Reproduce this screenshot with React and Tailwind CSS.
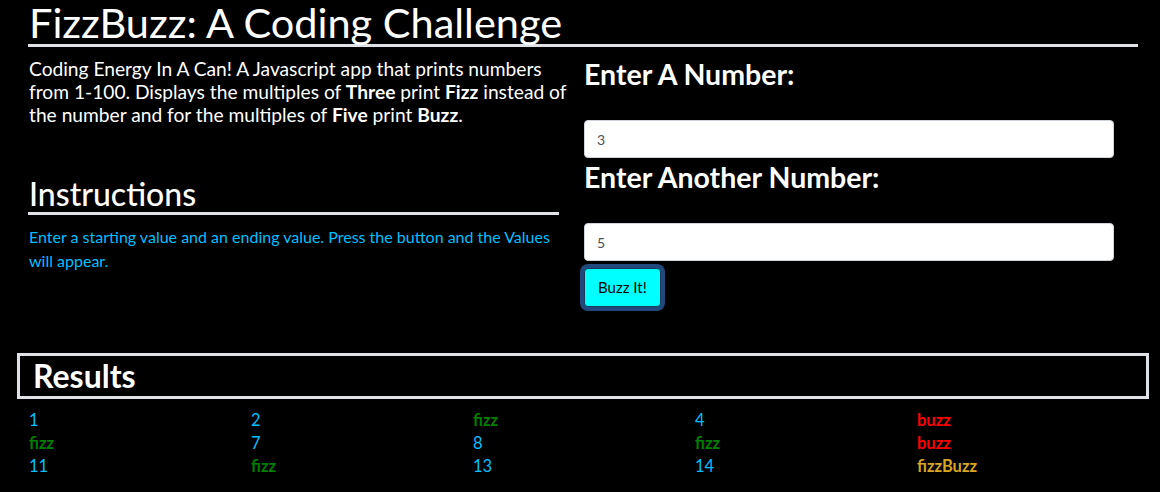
import React from "react";

const results = [
    "1", "2", "fizz", "4", "buzz",
    "fizz", "7", "8", "fizz", "buzz",
    "11", "fizz", "13", "14", "fizzBuzz",
];

const cellClass = (v) => {
    if (v === "fizz") return "text-[#008000] font-bold";
    if (v === "buzz") return "text-[#ff0000] font-bold";
    if (v === "fizzBuzz") return "text-[#daa520] font-bold";
    return "text-[#00bfff]";
};

const App = () => {
    return (
        <div className="min-h-[492px] bg-black text-white font-['Lato','Liberation_Sans',sans-serif]">
            <div className="ml-[28px] w-[1110px]">
                <h1 className="text-[41.5px] leading-[44px] pl-[1px] border-b-[3px] border-[#dee2e6]">
                    FizzBuzz: A Coding Challenge
                </h1>

                <div className="grid grid-cols-[531px_530px] gap-x-[25px] mt-[10px]">
                    {/* left side */}
                    <div>
                        <p className="text-[19.2px] leading-[23px] pl-[1px] whitespace-nowrap">
                            Coding Energy In A Can! A Javascript app that prints numbers<br />
                            from 1-100. Displays the multiples of <b className="font-bold">Three</b> print <b className="font-bold">Fizz</b> instead of<br />
                            the number and for the multiples of <b className="font-bold">Five</b> print <b className="font-bold">Buzz</b>.
                        </p>

                        <h2 className="mt-[50px] text-[32px] leading-[36px] font-medium pl-[1px] border-b-[3px] border-[#dee2e6]">
                            Instructions
                        </h2>
                        <p className="mt-[10px] text-[16px] leading-[24px] text-[#00bfff] pl-[1px]">
                            Enter a starting value and an ending value. Press the button and the Values will appear.
                        </p>
                    </div>

                    {/* right side */}
                    <div>
                        <label className="block text-[28.5px] leading-[32px] font-bold mt-[1px]">Enter A Number:</label>
                        <input
                            type="text"
                            defaultValue="3"
                            className="block mt-[30px] w-[530px] h-[38px] rounded-[4px] border border-[#ced4da] bg-white px-[12px] text-[14px] text-[#495057] outline-none"
                        />
                        <label className="block text-[28.5px] leading-[32px] font-bold mt-[3px]">Enter Another Number:</label>
                        <input
                            type="text"
                            defaultValue="5"
                            className="block mt-[30px] w-[530px] h-[38px] rounded-[4px] border border-[#ced4da] bg-white px-[12px] text-[14px] text-[#495057] outline-none"
                        />
                        <button className="mt-[7px] h-[39px] px-[13px] rounded-[4px] bg-[#00ffff] border border-[#1a3a5c] text-[15px] text-black ring-[4px] ring-[#22497c]">
                            Buzz It!
                        </button>
                    </div>
                </div>
            </div>

            <div className="ml-[17px] mr-[11px] mt-[46px] border-[3px] border-[#dee2e6] pl-[13px] h-[46px]">
                <h2 className="text-[32px] leading-[40px] font-bold">Results</h2>
            </div>

            <div className="ml-[29px] mt-[10px] grid grid-cols-[222px_222px_222px_222px_222px]">
                {results.map((v, i) => (
                    <div key={i} className={"text-[16.5px] leading-[23px] " + cellClass(v)}>
                        {v}
                    </div>
                ))}
            </div>
        </div>
    );
};

export default App;
